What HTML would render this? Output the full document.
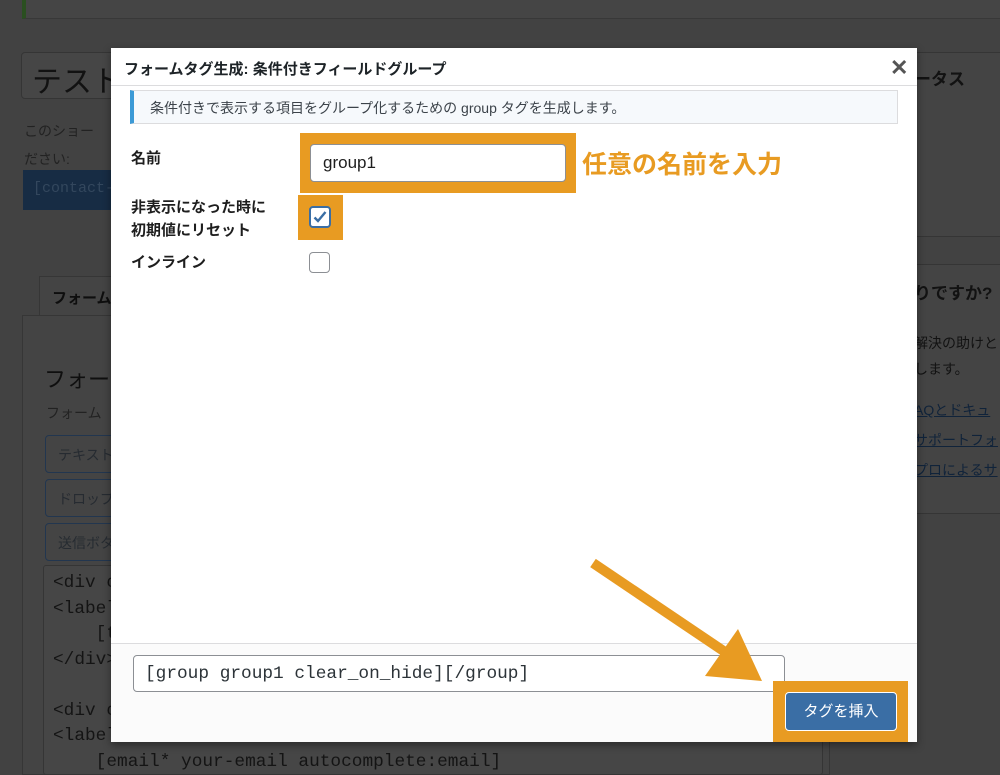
<!DOCTYPE html>
<html><head><meta charset="utf-8"><style>
*{box-sizing:border-box;margin:0;padding:0}
body{width:1000px;height:766px;background:#424242;position:relative;overflow:hidden;font-family:"Liberation Sans","Noto Sans CJK JP",sans-serif;color:#1e1e1e}
.a{position:absolute;white-space:nowrap;overflow:hidden}
.mono{font-family:"Liberation Mono","Noto Sans CJK JP",monospace}
</style></head><body>
<!-- underlying dimmed page -->
<div class="a" style="left:22px;top:0;width:978px;height:19px;border-bottom:1px solid #383838;border-left:4px solid #2a4f20;background:#454545"></div>
<div class="a" style="left:21px;top:52px;width:100px;height:47px;border:1px solid #353535;border-radius:4px;background:#464646;font-size:30px;padding:4px 10px;color:#121212">テスト</div>
<div class="a" style="left:24px;top:117px;font-size:14px;line-height:28px;color:#222;white-space:pre">このショー
ださい:</div>
<div class="a mono" style="left:23px;top:170px;width:100px;height:40px;background:#172c44;color:#33475d;font-size:15px;padding:10px 10px">[contact-</div>
<div class="a" style="left:39px;top:276px;width:80px;height:40px;border:1px solid #363636;border-bottom:none;background:#444;font-size:15px;font-weight:bold;padding:10px 12px;color:#0e0e0e">フォーム</div>
<div class="a" style="left:22px;top:315px;width:808px;height:460px;border:1px solid #363636;background:#444"></div>
<div class="a" style="left:44px;top:362px;font-size:22px;color:#0f0f0f">フォーム</div>
<div class="a" style="left:46px;top:403px;font-size:14px;color:#222">フォーム</div>
<div class="a" style="left:45px;top:435px;width:80px;height:38px;border:1px solid #22364f;border-radius:4px;font-size:14px;padding:9px 12px;color:#262b31">テキスト</div>
<div class="a" style="left:45px;top:479px;width:80px;height:38px;border:1px solid #22364f;border-radius:4px;font-size:14px;padding:9px 12px;color:#262b31">ドロップ</div>
<div class="a" style="left:45px;top:523px;width:80px;height:38px;border:1px solid #22364f;border-radius:4px;font-size:14px;padding:9px 12px;color:#262b31">送信ボタ</div>
<div class="a mono" style="left:43px;top:565px;width:780px;height:210px;border:1px solid #353535;border-radius:3px;background:#464646;font-size:17.8px;line-height:25.5px;padding:5px 9px;color:#141414;white-space:pre">&lt;div class
&lt;label
    [text
&lt;/div&gt;

&lt;div class
&lt;label
    [email* your-email autocomplete:email]</div>
<div class="a" style="left:913px;top:52px;width:90px;height:185px;border:1px solid #353535;background:#444;font-size:17px;font-weight:bold;padding:12px 0;color:#121212">ータス</div>
<div class="a" style="left:913px;top:264px;width:90px;height:250px;border:1px solid #353535;background:#444;font-size:14px;color:#121212">
<div style="position:absolute;left:0;top:14px;font-size:17px;font-weight:bold">りですか?</div>
<div style="position:absolute;left:0;top:65px;line-height:26px;white-space:pre">解決の助けと
します。</div>
<div style="position:absolute;left:0;top:130px;line-height:30px;color:#10233a;text-decoration:underline;white-space:pre">AQとドキュ
サポートフォ
プロによるサ</div>
</div>

<!-- modal -->
<div class="a" style="left:111px;top:48px;width:806px;height:694px;background:#fff;box-shadow:0 3px 8px rgba(0,0,0,.4)">
 <div class="a" style="left:0;top:0;width:806px;height:38px;border-bottom:1px solid #dcdcde;font-size:15px;font-weight:bold;padding:10px 13px;color:#1d2327">フォームタグ生成: 条件付きフィールドグループ</div>
 <div class="a" style="left:779px;top:7px;font-size:22px;font-weight:bold;color:#555">✕</div>
 <div class="a" style="left:19px;top:42px;width:768px;height:34px;border:1px solid #dcdcde;border-left:4px solid #3c9ad6;background:#f6f9fc;font-size:14px;padding:7px 16px;color:#3c434a">条件付きで表示する項目をグループ化するための group タグを生成します。</div>
 <div class="a" style="left:20px;top:99px;font-size:15px;font-weight:bold">名前</div>
 <div class="a" style="left:20px;top:148px;font-size:15px;font-weight:bold;line-height:23px;white-space:pre">非表示になった時に
初期値にリセット</div>
 <div class="a" style="left:20px;top:203px;font-size:15px;font-weight:bold">インライン</div>
 <div class="a" style="left:189px;top:85px;width:276px;height:60px;background:#e89b22"></div>
 <div class="a" style="left:199px;top:96px;width:256px;height:38px;background:#fff;border:1px solid #8c8f94;border-radius:4px;font-size:17px;padding:8px 12px">group1</div>
 <div class="a" style="left:187px;top:147px;width:45px;height:45px;background:#e89b22"></div>
 <div class="a" style="left:198px;top:158px;width:22px;height:22px;background:#fff;border:2px solid #3a6ea5;border-radius:4px"><svg width="18" height="18" viewBox="0 0 18 18" style="position:absolute;left:0;top:0"><path d="M3.5 9.5 L7 13 L14.5 4" stroke="#3a6ea5" stroke-width="2.4" fill="none"/></svg></div>
 <div class="a" style="left:198px;top:204px;width:21px;height:21px;background:#fff;border:1px solid #8c8f94;border-radius:4px"></div>
 <div class="a" style="left:471px;top:97px;font-size:25px;font-weight:bold;color:#e89b22">任意の名前を入力</div>
 <div class="a" style="left:0;top:595px;width:806px;height:99px;background:#fbfbfb;border-top:1px solid #dcdcde"></div>
 <div class="a mono" style="left:22px;top:607px;width:652px;height:37px;background:#fff;border:1px solid #8c8f94;border-radius:4px;font-size:17.8px;padding:8px 11px;color:#2c3338">[group group1 clear_on_hide][/group]</div>
 <div class="a" style="left:662px;top:633px;width:135px;height:61px;background:#e89b22"></div>
 <div class="a" style="left:674px;top:644px;width:112px;height:39px;background:#3a6ea5;border:1px solid #fff;border-radius:4px;color:#fff;font-size:15px;text-align:center;line-height:37px">タグを挿入</div>
</div>
<svg style="position:absolute;left:0;top:0" width="1000" height="766"><path d="M593 563 L728 654" stroke="#e89b22" stroke-width="10" fill="none"/><path d="M705 676 L738 629 L762 681 Z" fill="#e89b22"/></svg>
</body></html>
